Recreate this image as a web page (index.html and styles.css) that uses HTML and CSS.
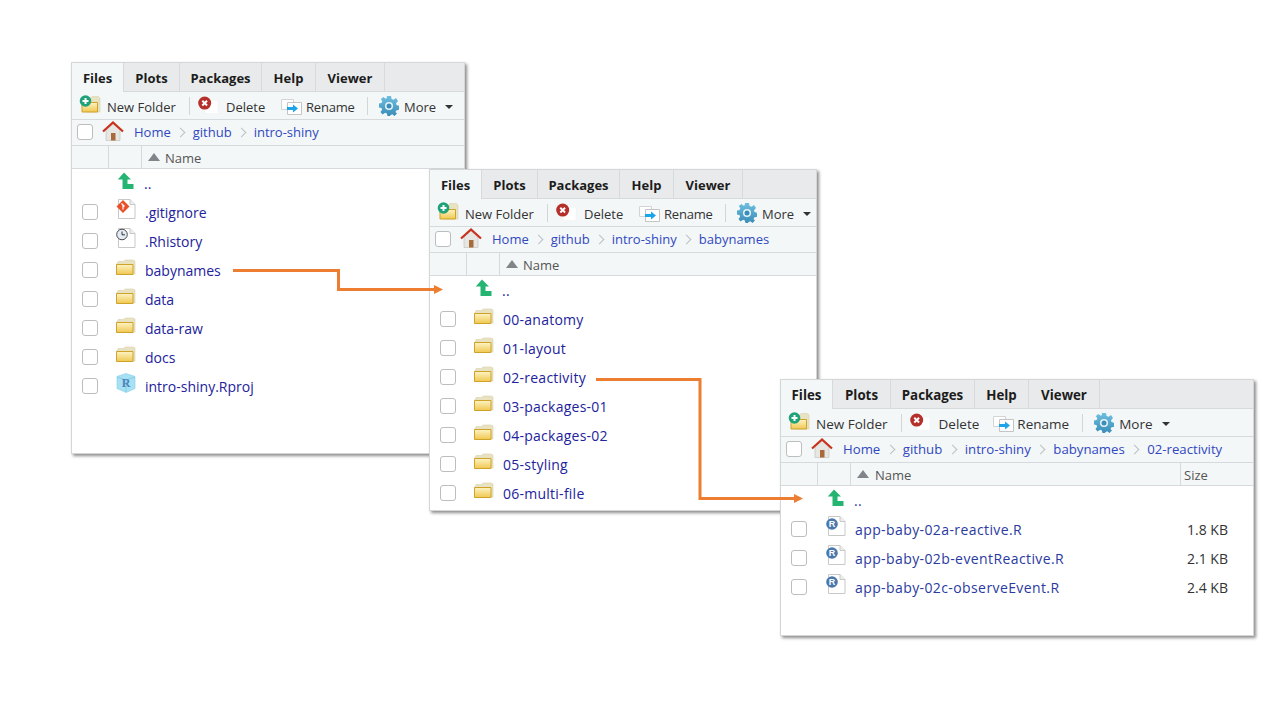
FILE: index.html
```html
<!DOCTYPE html>
<html lang="en">
<head>
    <meta charset="UTF-8">
    <title>Files pane navigation</title>
    <link rel="stylesheet" href="styles.css">
</head>
<body>
    <!-- icons used by all three panes -->
    <svg class="sprite" width="0" height="0">
        <defs>
            <linearGradient id="folderFill" x1="0" y1="0" x2="0" y2="1">
                <stop offset="0" stop-color="#fdf3c4"/>
                <stop offset="1" stop-color="#f0c850"/>
            </linearGradient>
            <linearGradient id="gearFill" x1="0" y1="0" x2="0" y2="1">
                <stop offset="0" stop-color="#6fbfe0"/>
                <stop offset="1" stop-color="#3a8db8"/>
            </linearGradient>
            <symbol id="i-folder" viewBox="0 0 20 16">
                <path d="M1 15V4h1V2.500h5.500L9 1h8l2 1v13z" fill="#e8e2c0" stroke="#d8d2b0" stroke-width=".6"/>
                <path d="M.5 5.500h16.500V15.500H.5z" fill="url(#folderFill)" stroke="#cfa22a"/>
            </symbol>
            <symbol id="i-new" viewBox="0 0 22 18">
                <path d="M7 3h5l1-1.500h6.500L21 3v14H7z" fill="#e8e2c0" stroke="#d8d2b0" stroke-width=".6"/>
                <path d="M3 7.500h15.500V17H3z" fill="url(#folderFill)" stroke="#cfa22a"/>
                <circle cx="6.500" cy="6" r="5.800" fill="#1fa27a"/>
                <path d="M3.500 6h6M6.500 3v6" stroke="#fff" stroke-width="2"/>
            </symbol>
            <symbol id="i-delete" viewBox="0 0 22 18">
                <path d="M7 4h14v14H7z" fill="#fff" stroke="#eef0f0" stroke-width=".6"/>
                <circle cx="7" cy="7" r="6.800" fill="#b5302a"/>
                <path d="M4.500 4.500l5 5M9.500 4.500l-5 5" stroke="#fff" stroke-width="2"/>
            </symbol>
            <symbol id="i-rename" viewBox="0 0 21 18">
                <path d="M.5 2.500h12v10H.5z" fill="#fff" stroke="#d4d4d4"/>
                <path d="M6.500 5.500h14v12h-14z" fill="#fff" stroke="#c4c4c4"/>
                <path d="M6 10h6V7.500l5 4-5 4V13H6z" fill="#1ea4e8"/>
            </symbol>
            <symbol id="i-gear" viewBox="0 0 20 20">
                <path d="M8 0h4l.6 3 1.900.8L17 2l2 3-2 2.200.5 1.800 2.500.8v4l-2.800.6-.7 1.700L18 17.500 15.500 20l-2.200-1.700-1.700.7L11 20H8.500l-.6-2.600-1.800-.7L3.500 18.500 1.500 16l1.600-2.300-.6-1.700L0 11.500v-4l2.600-.5.700-1.700L1.800 3 4.500 1l2.200 1.700 1-.5z" fill="url(#gearFill)"/>
                <circle cx="10" cy="10" r="4" fill="#e8f4f8"/>
                <circle cx="10" cy="10" r="2.500" fill="#3a8db8"/>
            </symbol>
            <symbol id="i-home" viewBox="0 0 22 20">
                <path d="M4 9l7-6 7 6v10.500H4z" fill="#e6e6e2" stroke="#bdbdb8" stroke-width=".6"/>
                <path d="M9 12h4.500v7.500H9z" fill="#a86a3a"/>
                <path d="M1 10.500L11 1.500l10 9" fill="none" stroke="#c8321e" stroke-width="2.200"/>
            </symbol>
            <symbol id="i-up" viewBox="0 0 17 18">
                <path d="M7 .5L14 7.500H10.500V12H16.500V17H5.500V7.500H.8z" fill="#25b472"/>
            </symbol>
            <symbol id="i-file" viewBox="0 0 20 20">
                <path d="M2.500 .5H14L19 5.500V19.500H2.500z" fill="#fff" stroke="#c8c8c8"/>
                <path d="M14 .5V5.500H19" fill="#eee" stroke="#c8c8c8"/>
            </symbol>
            <symbol id="i-git" viewBox="0 0 20 20">
                <use href="#i-file"/>
                <path d="M7 1l6.500 6.500L7 14 .5 7.500z" fill="#e8502a"/>
                <path d="M5.500 4.500l3 3M7 6v4.500" stroke="#fff" stroke-width="1.200"/>
            </symbol>
            <symbol id="i-history" viewBox="0 0 20 20">
                <use href="#i-file"/>
                <circle cx="6" cy="6.500" r="5.300" fill="#e4ecf6" stroke="#4a4a4a"/>
                <path d="M6 3.500v3.300h3" fill="none" stroke="#333" stroke-width="1"/>
            </symbol>
            <symbol id="i-rproj" viewBox="0 0 20 20">
                <path d="M10 .5L19 3.500V15.500L10 19.500 1 15.500V3.500z" fill="#a8e0f4" stroke="#80cce8" stroke-width=".6"/>
                <path d="M1 4l9 3 9-3M10 7v12" fill="none" stroke="#7cc8e4" stroke-width=".8"/>
                <text x="10" y="14" class="glyph-proj">R</text>
            </symbol>
            <symbol id="i-rfile" viewBox="0 0 20 20">
                <use href="#i-file"/>
                <circle cx="6" cy="8" r="5.800" fill="#4a78ad"/>
                <text x="6" y="11.200" class="glyph-r">R</text>
            </symbol>
        </defs>
    </svg>

    <section class="pane pane-home">
        <nav class="tabs">
            <span class="tab active">Files</span><span class="tab">Plots</span><span class="tab">Packages</span><span class="tab">Help</span><span class="tab">Viewer</span>
        </nav>
        <div class="toolbar">
            <svg class="ico-new"><use href="#i-new"/></svg><span class="tool tool-new">New Folder</span>
            <i class="sep"></i>
            <svg class="ico-delete"><use href="#i-delete"/></svg><span class="tool tool-delete">Delete</span>
            <svg class="ico-rename"><use href="#i-rename"/></svg><span class="tool tool-rename">Rename</span>
            <i class="sep"></i>
            <svg class="ico-gear"><use href="#i-gear"/></svg><span class="tool tool-more">More</span>
            <i class="caret"></i>
        </div>
        <div class="crumbs">
            <span class="check"></span>
            <svg class="ico-home"><use href="#i-home"/></svg>
            <a>Home</a><b></b><a>github</a><b></b><a>intro-shiny</a>
        </div>
        <div class="thead">
            <span class="cell-check"></span><span class="cell-icon"></span>
            <span class="cell-name"><i class="sort"></i>Name</span>
        </div>
        <ul class="rows">
            <li class="row row-up"><svg class="ico-up"><use href="#i-up"/></svg><a>..</a></li>
            <li class="row"><span class="check"></span><svg class="ico"><use href="#i-git"/></svg><a>.gitignore</a></li>
            <li class="row"><span class="check"></span><svg class="ico"><use href="#i-history"/></svg><a>.Rhistory</a></li>
            <li class="row"><span class="check"></span><svg class="ico"><use href="#i-folder"/></svg><a>babynames</a></li>
            <li class="row"><span class="check"></span><svg class="ico"><use href="#i-folder"/></svg><a>data</a></li>
            <li class="row"><span class="check"></span><svg class="ico"><use href="#i-folder"/></svg><a>data-raw</a></li>
            <li class="row"><span class="check"></span><svg class="ico"><use href="#i-folder"/></svg><a>docs</a></li>
            <li class="row"><span class="check"></span><svg class="ico"><use href="#i-rproj"/></svg><a>intro-shiny.Rproj</a></li>
        </ul>
    </section>

    <section class="pane pane-baby">
        <nav class="tabs">
            <span class="tab active">Files</span><span class="tab">Plots</span><span class="tab">Packages</span><span class="tab">Help</span><span class="tab">Viewer</span>
        </nav>
        <div class="toolbar">
            <svg class="ico-new"><use href="#i-new"/></svg><span class="tool tool-new">New Folder</span>
            <i class="sep"></i>
            <svg class="ico-delete"><use href="#i-delete"/></svg><span class="tool tool-delete">Delete</span>
            <svg class="ico-rename"><use href="#i-rename"/></svg><span class="tool tool-rename">Rename</span>
            <i class="sep"></i>
            <svg class="ico-gear"><use href="#i-gear"/></svg><span class="tool tool-more">More</span>
            <i class="caret"></i>
        </div>
        <div class="crumbs">
            <span class="check"></span>
            <svg class="ico-home"><use href="#i-home"/></svg>
            <a>Home</a><b></b><a>github</a><b></b><a>intro-shiny</a><b></b><a>babynames</a>
        </div>
        <div class="thead">
            <span class="cell-check"></span><span class="cell-icon"></span>
            <span class="cell-name"><i class="sort"></i>Name</span>
        </div>
        <ul class="rows">
            <li class="row row-up"><svg class="ico-up"><use href="#i-up"/></svg><a>..</a></li>
            <li class="row"><span class="check"></span><svg class="ico"><use href="#i-folder"/></svg><a>00-anatomy</a></li>
            <li class="row"><span class="check"></span><svg class="ico"><use href="#i-folder"/></svg><a>01-layout</a></li>
            <li class="row"><span class="check"></span><svg class="ico"><use href="#i-folder"/></svg><a>02-reactivity</a></li>
            <li class="row"><span class="check"></span><svg class="ico"><use href="#i-folder"/></svg><a>03-packages-01</a></li>
            <li class="row"><span class="check"></span><svg class="ico"><use href="#i-folder"/></svg><a>04-packages-02</a></li>
            <li class="row"><span class="check"></span><svg class="ico"><use href="#i-folder"/></svg><a>05-styling</a></li>
            <li class="row"><span class="check"></span><svg class="ico"><use href="#i-folder"/></svg><a>06-multi-file</a></li>
        </ul>
    </section>

    <section class="pane pane-react">
        <nav class="tabs">
            <span class="tab active">Files</span><span class="tab">Plots</span><span class="tab">Packages</span><span class="tab">Help</span><span class="tab">Viewer</span>
        </nav>
        <div class="toolbar">
            <svg class="ico-new"><use href="#i-new"/></svg><span class="tool tool-new">New Folder</span>
            <i class="sep"></i>
            <svg class="ico-delete"><use href="#i-delete"/></svg><span class="tool tool-delete">Delete</span>
            <svg class="ico-rename"><use href="#i-rename"/></svg><span class="tool tool-rename">Rename</span>
            <i class="sep"></i>
            <svg class="ico-gear"><use href="#i-gear"/></svg><span class="tool tool-more">More</span>
            <i class="caret"></i>
        </div>
        <div class="crumbs">
            <span class="check"></span>
            <svg class="ico-home"><use href="#i-home"/></svg>
            <a>Home</a><b></b><a>github</a><b></b><a>intro-shiny</a><b></b><a>babynames</a><b></b><a>02-reactivity</a>
        </div>
        <div class="thead">
            <span class="cell-check"></span><span class="cell-icon"></span>
            <span class="cell-name"><i class="sort"></i>Name</span>
            <span class="cell-size">Size</span>
        </div>
        <ul class="rows">
            <li class="row row-up"><svg class="ico-up"><use href="#i-up"/></svg><a>..</a></li>
            <li class="row"><span class="check"></span><svg class="ico"><use href="#i-rfile"/></svg><a>app-baby-02a-reactive.R</a><span class="size">1.8 KB</span></li>
            <li class="row"><span class="check"></span><svg class="ico"><use href="#i-rfile"/></svg><a>app-baby-02b-eventReactive.R</a><span class="size">2.1 KB</span></li>
            <li class="row"><span class="check"></span><svg class="ico"><use href="#i-rfile"/></svg><a>app-baby-02c-observeEvent.R</a><span class="size">2.4 KB</span></li>
        </ul>
    </section>

    <!-- orange connectors between the panes -->
    <svg class="connectors" width="1280" height="720" viewBox="0 0 1280 720">
        <path d="M233 270.500H338.500V289.500H435" fill="none" stroke="#ed7d31" stroke-width="3"/>
        <path d="M434 285L443 289.500 434 294z" fill="#ed7d31"/>
        <path d="M596 379.500H700V498.500H795" fill="none" stroke="#ed7d31" stroke-width="3"/>
        <path d="M794 494L803 498.500 794 503z" fill="#ed7d31"/>
    </svg>
</body>
</html>
```

FILE: styles.css
```css
body {
    margin: 0;
    background: #fff;
    font-family: "Open Sans", "Noto Sans", sans-serif;
    font-size: 13.5px;
    color: #333;
}
.sprite {
    position: absolute;
}
.pane {
    position: absolute;
    box-sizing: border-box;
    background: #fff;
    border: 1px solid #d4d6d8;
    box-shadow: 2px 2px 3px rgba(0, 0, 0, 0.45);
    overflow: hidden;
}
.pane-home {
    left: 71px;
    top: 62px;
    width: 394px;
    height: 392px;
}
.pane-baby {
    left: 429px;
    top: 169px;
    width: 388px;
    height: 342px;
}
.pane-react {
    left: 780px;
    top: 379px;
    width: 474px;
    height: 257px;
}

/* tabs */
.tabs {
    display: flex;
    height: 29px;
    background: #e8eaeb;
    border-bottom: 1px solid #d6dadc;
    box-sizing: border-box;
}
.tab {
    box-sizing: border-box;
    text-align: center;
    line-height: 30px;
    font-weight: 700;
    font-size: 13px;
    color: #1c1c1c;
    border-right: 1px solid #d6dadc;
}
.tab:nth-child(1) { width: 52px; }
.tab:nth-child(2) { width: 56px; }
.tab:nth-child(3) { width: 82px; }
.tab:nth-child(4) { width: 54px; }
.tab:nth-child(5) { width: 69px; }
.pane-react .tab { font-size: 13.300px; }
.pane-react .tab:nth-child(2) { width: 58px; }
.pane-react .tab:nth-child(3) { width: 84px; }
.pane-react .tab:nth-child(5) { width: 71px; }
.tab.active {
    background: #f4f7f8;
    height: 29px;
}

/* toolbar */
.toolbar {
    display: flex;
    align-items: center;
    height: 28px;
    padding-left: 7px;
    background: #f4f7f8;
    border-bottom: 1px solid #d6dadc;
    box-sizing: border-box;
}
.tool {
    font-size: 13px;
    color: #333;
    line-height: 28px;
    padding-top: 2px;
    white-space: nowrap;
}
.tool-new { width: 69px; }
.tool-delete { width: 40px; }
.tool-rename { width: 48px; letter-spacing: -0.2px; }
.tool-more { width: 32px; }
.pane-react .tool {
    width: auto;
    font-size: 13.500px;
    letter-spacing: 0;
}
.ico-new {
    width: 22px;
    height: 18px;
    margin-right: 6px;
    margin-top: -3px;
}
.ico-delete {
    width: 21px;
    height: 18px;
    margin-right: 7px;
    margin-top: -1px;
}
.pane-react .ico-delete { margin-right: 8px; }
.ico-rename {
    width: 21px;
    height: 18px;
    margin-left: 15px;
    margin-right: 4px;
}
.pane-react .ico-rename { margin-left: 14px; margin-right: 3px; }
.ico-gear {
    width: 20px;
    height: 20px;
    margin-left: 3px;
    margin-right: 5px;
}
.sep {
    width: 1px;
    height: 18px;
    margin: 0 8px 0 13px;
    background: #d2d6d8;
}
.caret {
    width: 0;
    height: 0;
    margin-left: 9px;
    margin-top: 2px;
    border: 4px solid transparent;
    border-top-color: #333;
    border-bottom: 0;
}

/* breadcrumb */
.crumbs {
    display: flex;
    align-items: center;
    height: 26px;
    padding-left: 5px;
    background: #f4f7f8;
    border-bottom: 1px solid #d6dadc;
    box-sizing: border-box;
}
.crumbs a {
    margin-top: -2px;
    color: #3048c0;
    font-size: 13px;
}
.crumbs b {
    width: 6px;
    height: 6px;
    margin: 0 9px 0 6px;
    border-top: 1px solid #bcc0c4;
    border-right: 1px solid #bcc0c4;
    transform: rotate(45deg);
}
.pane-react .crumbs a { font-size: 13.200px; }
.pane-react .crumbs b { margin-left: 6.500px; margin-right: 9px; }
.crumbs .check {
    margin: -1px 0 0;
}
.ico-home {
    width: 22px;
    height: 20px;
    margin: -4px 10px 0 9px;
}
.check {
    width: 14px;
    height: 14px;
    flex: none;
    border: 1px solid #bdbdbd;
    border-radius: 3px;
    background: #fff;
}

/* column headings */
.thead {
    display: flex;
    height: 23px;
    background: #f4f7f8;
    border-bottom: 1px solid #d6dadc;
    box-sizing: border-box;
    font-size: 13px;
    color: #555;
    line-height: 24px;
}
.cell-check {
    width: 36px;
    border-right: 1px solid #d6dadc;
}
.cell-icon {
    width: 32px;
    border-right: 1px solid #d6dadc;
}
.cell-name {
    flex: 1;
    padding-left: 6px;
}
.sort {
    display: inline-block;
    width: 0;
    height: 0;
    margin-right: 5px;
    vertical-align: 2px;
    border-left: 6.500px solid transparent;
    border-right: 6.500px solid transparent;
    border-bottom: 8px solid #80858a;
}
.pane-react .sort { margin-right: 6px; }
.cell-size {
    width: 69px;
    padding-left: 3px;
    border-left: 1px solid #d6dadc;
}

/* file rows */
.rows {
    list-style: none;
    margin: 0;
    padding: 0;
}
.row {
    display: flex;
    align-items: center;
    height: 29px;
    padding-left: 10px;
    font-size: 14px;
}
.row a {
    color: #22229c;
}
.pane-baby .row a { letter-spacing: 0.25px; }
.pane-react .row a {
    color: #2a3a9f;
    letter-spacing: 0.4px;
}
.row .check {
    margin-top: -1px;
    margin-right: 18px;
}
.pane-react .row .check { margin-right: 19px; }
.row .ico {
    width: 20px;
    height: 20px;
    margin-right: 9px;
    margin-top: -7px;
}
.row-up {
    padding-left: 45px;
}
.pane-react .row-up { padding-left: 46px; }
.ico-up {
    width: 17px;
    height: 18px;
    margin-right: 10px;
    margin-top: -5px;
}
.size {
    margin-left: auto;
    padding-right: 25px;
    color: #333;
}
.glyph-r {
    font: 700 9px "Liberation Sans", sans-serif;
    fill: #fff;
    text-anchor: middle;
}
.glyph-proj {
    font: 700 12px "Liberation Serif", serif;
    fill: #4a86b8;
    text-anchor: middle;
}
.connectors {
    position: absolute;
    left: 0;
    top: 0;
}
```
